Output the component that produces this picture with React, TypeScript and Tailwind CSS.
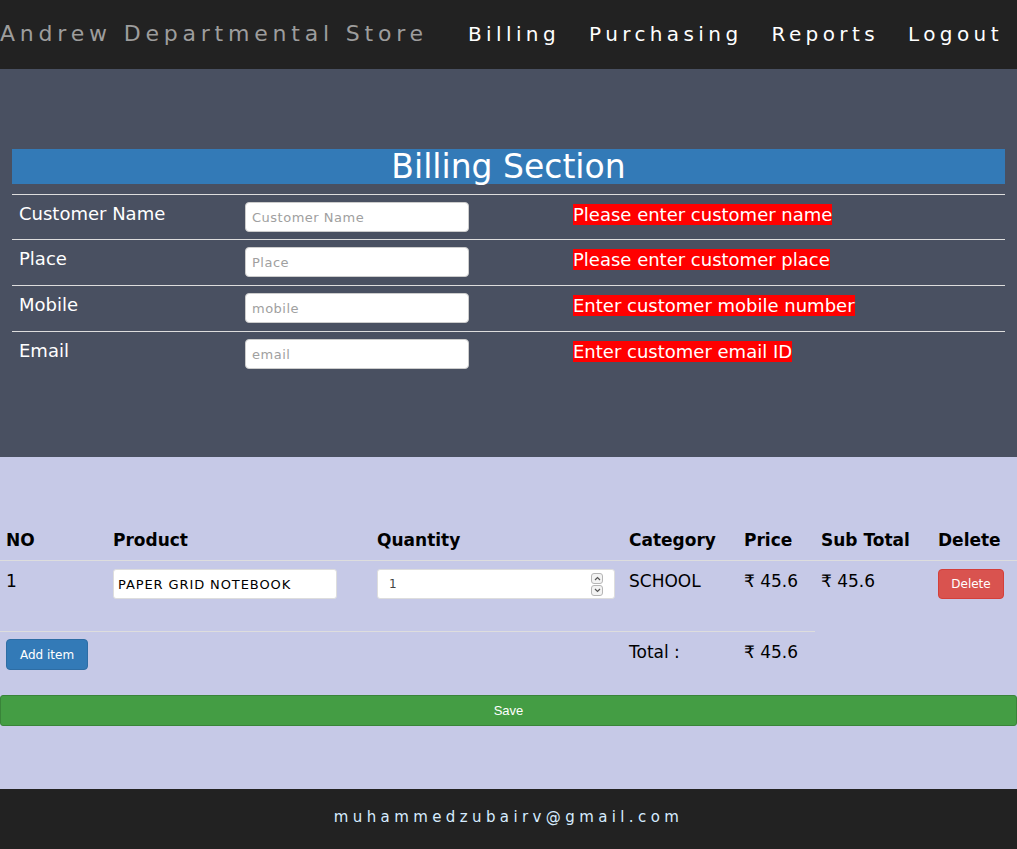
import { useState } from "react";

const navLinks = ["Billing", "Purchasing", "Reports", "Logout"];

const customerFields = [
  { label: "Customer Name", placeholder: "Customer Name", error: "Please enter customer name" },
  { label: "Place", placeholder: "Place", error: "Please enter customer place" },
  { label: "Mobile", placeholder: "mobile", error: "Enter customer mobile number" },
  { label: "Email", placeholder: "email", error: "Enter customer email ID" },
];

function Spinner() {
  return (
    <div className="flex flex-col gap-[1px]">
      <span className="flex h-[11px] w-[12px] items-center justify-center rounded-[3px] border border-[#b5b5b5] bg-[#f3f3f3]">
        <svg width="7" height="5" viewBox="0 0 7 5" fill="none" stroke="#555" strokeWidth="1.2">
          <path d="M1 4 L3.5 1.5 L6 4" />
        </svg>
      </span>
      <span className="flex h-[11px] w-[12px] items-center justify-center rounded-[3px] border border-[#b5b5b5] bg-[#f3f3f3]">
        <svg width="7" height="5" viewBox="0 0 7 5" fill="none" stroke="#555" strokeWidth="1.2">
          <path d="M1 1 L3.5 3.5 L6 1" />
        </svg>
      </span>
    </div>
  );
}

export default function App() {
  const [qty] = useState(1);
  const price = 45.6;

  return (
    <div className="min-h-[849px] w-full font-['DejaVu_Sans',sans-serif]">
      {/* navbar */}
      <header className="flex h-[69px] items-center bg-[#222222] pb-[2px]">
        <span className="text-[22px] tracking-[4.8px] text-[#9d9d9d]">Andrew Departmental Store</span>
        <nav className="ml-[40px] flex gap-[29px]">
          {navLinks.map((l) => (
            <a key={l} className="text-[20px] tracking-[4.4px] text-white">
              {l}
            </a>
          ))}
        </nav>
      </header>

      {/* customer details */}
      <section className="bg-[#495061] px-[12px] py-[80px]">
        <h1 className="flex h-[35px] items-center justify-center bg-[#337ab7] text-[33px] leading-none text-white">
          Billing Section
        </h1>
        <div className="mt-[10px]">
          {customerFields.map((f, i) => (
            <div
              key={f.label}
              className={`grid grid-cols-[226px_328px_1fr] border-t border-[#dddddd] pt-[7px] ${
                i === 0 ? "h-[45px]" : "h-[46px]"
              }`}
            >
              <div className="px-[7px] text-[18px] leading-[24px] text-white">{f.label}</div>
              <div className="px-[7px]">
                <input
                  placeholder={f.placeholder}
                  className="h-[30px] w-[224px] rounded-[4px] border border-[#cccccc] bg-white px-[6px] text-[13px] tracking-[0.5px] text-black placeholder:text-[#a0a0a0]"
                />
              </div>
              <div className="px-[7px] pt-[2px]">
                <span className="bg-[#ff0000] text-[18px] leading-[21px] text-white">{f.error}</span>
              </div>
            </div>
          ))}
        </div>
      </section>

      {/* items */}
      <section className="bg-[#c6c9e7] pb-[63px] pt-[63px]">
        <div className="grid grid-cols-[107px_264px_252px_115px_77px_117px_1fr] text-black">
          {["NO", "Product", "Quantity", "Category", "Price", "Sub Total", "Delete"].map((h) => (
            <div
              key={h}
              className="h-[41px] border-b border-[#dddddd] pl-[6px] pt-[8px] text-[17px] font-bold leading-[24px]"
            >
              {h}
            </div>
          ))}

          <div className="h-[70px] pl-[6px] pt-[8px] text-[17px] leading-[24px]">{qty}</div>
          <div className="pl-[6px] pt-[8px]">
            <input
              defaultValue="PAPER GRID NOTEBOOK"
              className="h-[30px] w-[224px] rounded-[3px] border border-[#dddddd] bg-white px-[4px] text-[13px] tracking-[0.9px] text-black"
            />
          </div>
          <div className="pl-[6px] pt-[8px]">
            <div className="flex h-[30px] w-[238px] items-center justify-between rounded-[3px] border border-[#dddddd] bg-white pl-[11px] pr-[11px]">
              <span className="text-[12px] text-[#444]">{qty}</span>
              <Spinner />
            </div>
          </div>
          <div className="pl-[6px] pt-[8px] text-[17px] leading-[24px]">SCHOOL</div>
          <div className="pl-[6px] pt-[8px] text-[17px] leading-[24px]">₹ {price}</div>
          <div className="pl-[6px] pt-[8px] text-[17px] leading-[24px]">₹ {(price * qty).toFixed(1)}</div>
          <div className="pl-[6px] pt-[8px]">
            <button className="h-[30px] w-[66px] rounded-[4px] border border-[#d43f3a] bg-[#d9534f] text-[12px] text-white">
              Delete
            </button>
          </div>

          <div className="col-span-3 h-[46px] border-t border-[#dddddd] pl-[6px] pt-[7px]">
            <button className="h-[31px] w-[82px] rounded-[4px] border border-[#2e6da4] bg-[#337ab7] text-[12px] text-white">
              Add item
            </button>
          </div>
          <div className="border-t border-[#dddddd] pl-[6px] pt-[8px] text-[17px] leading-[24px]">Total :</div>
          <div className="border-t border-[#dddddd] pl-[6px] pt-[8px] text-[17px] leading-[24px]">₹ {price}</div>
          <div />
          <div />
        </div>

        <button className="mt-[18px] h-[31px] w-full rounded-[3px] border border-[#398439] bg-[#449d44] font-['Liberation_Sans',sans-serif] text-[13px] text-white">
          Save
        </button>
      </section>

      {/* footer */}
      <footer className="flex h-[60px] items-center justify-center bg-[#222222] pb-[4px]">
        <span className="text-[15px] tracking-[4.4px] text-[#d6ecff]">muhammedzubairv@gmail.com</span>
      </footer>
    </div>
  );
}
